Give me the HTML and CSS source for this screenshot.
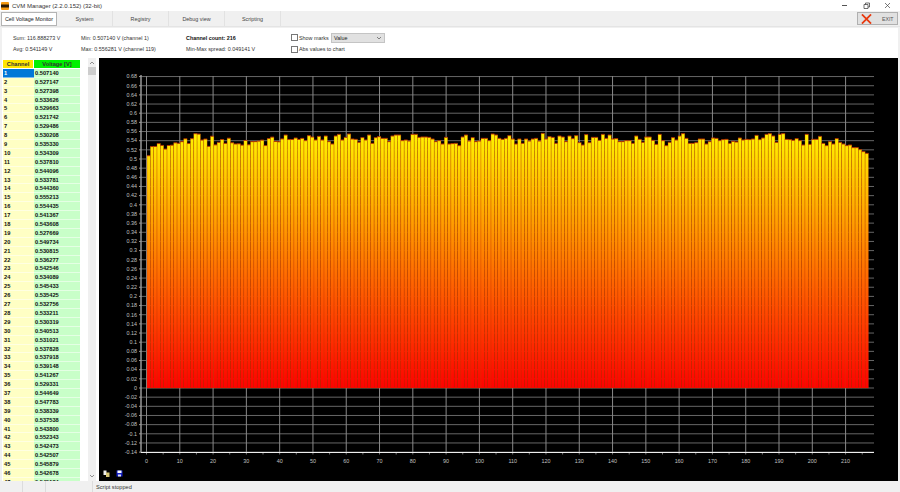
FILE: index.html
```html
<!DOCTYPE html>
<html lang="en">
<head>
    <meta charset="UTF-8">
    <title>CVM Manager (2.2.0.152) (32-bit)</title>
    <link rel="stylesheet" href="styles.css">
</head>
<body>
    <div class="titlebar">
        <svg class="app-icon" viewBox="0 0 8 8">
            <rect width="8" height="8" rx="1" fill="#f59a12"/>
            <rect x="0" y="2.5" width="8" height="3" fill="#2a1a05"/>
        </svg>
        <span class="app-title">CVM Manager (2.2.0.152) (32-bit)</span>
        <div class="window-controls">
            <svg viewBox="0 0 7 7"><path d="M1 3.5h5" stroke="#555" fill="none"/></svg>
            <svg viewBox="0 0 7 7"><path d="M1 2.5h4v4h-4zM2.5 2.5v-1.500h4v4h-1.500" stroke="#333" stroke-width=".7" fill="none"/></svg>
            <svg viewBox="0 0 7 7"><path d="M1 1l5 5M6 1l-5 5" stroke="#444" stroke-width=".7" fill="none"/></svg>
        </div>
    </div>

    <div class="tabs">
        <div class="tab active">Cell Voltage Monitor</div>
        <div class="tab">System</div>
        <div class="tab">Registry</div>
        <div class="tab">Debug view</div>
        <div class="tab">Scripting</div>
        <button class="exit-btn">
            <svg viewBox="0 0 12 11"><path d="M1 .5l10 10M11 .5l-10 10" stroke="#e8380d" stroke-width="2" fill="none"/></svg>
            <span>EXIT</span>
        </button>
    </div>

    <div class="info">
        <div class="info-col col-sum">
            <span>Sum: 116.888273 V</span>
            <span>Avg: 0.541149 V</span>
        </div>
        <div class="info-col col-min">
            <span>Min: 0.507140 V (channel 1)</span>
            <span>Max: 0.556281 V (channel 119)</span>
        </div>
        <div class="info-col col-count">
            <b>Channel count: 216</b>
            <span>Min-Max spread: 0.049141 V</span>
        </div>
        <div class="info-col col-options">
            <div class="option">
                <label class="check"><i></i>Show marks</label>
                <div class="select">Value
                    <svg viewBox="0 0 6 4"><path d="M1 1l2 2 2-2" stroke="#555" stroke-width=".7" fill="none"/></svg>
                </div>
            </div>
            <div class="option">
                <label class="check"><i></i>Abs values to chart</label>
            </div>
        </div>
    </div>

    <div class="main">
        <div class="channels">
            <div class="grid" id="channel-grid">
                <div class="head-channel">Channel</div>
                <div class="head-voltage">Voltage [V]</div>
            </div>
            <div class="scrollbar">
                <svg viewBox="0 0 6 4"><path d="M1 3l2-2 2 2" stroke="#666" stroke-width=".7" fill="none"/></svg>
                <div class="thumb"></div>
                <svg class="arrow-down" viewBox="0 0 6 4"><path d="M1 1l2 2 2-2" stroke="#666" stroke-width=".7" fill="none"/></svg>
            </div>
        </div>

        <div class="chart">
            <svg id="chart-svg" viewBox="99 58 799 423">
                <defs>
                    <linearGradient id="bar-fill" gradientUnits="userSpaceOnUse" x1="0" y1="138" x2="0" y2="388">
                        <stop offset="0" stop-color="#fff000"/>
                        <stop offset="1" stop-color="#ff0000"/>
                    </linearGradient>
                </defs>
            </svg>
            <div class="chart-tools">
                <svg viewBox="0 0 7 7">
                    <path d="M.5.500h3v4.500h-3z" fill="#eee"/>
                    <path d="M3 2.500h3.500v4.500h-3.500z" fill="#d8c878"/>
                </svg>
                <svg viewBox="0 0 7 7">
                    <path d="M.5.500h6v6h-6z" fill="#1420c8"/>
                    <path d="M1.500.500h4v2.500h-4z" fill="#fff"/>
                    <path d="M2 4.500h3v2h-3z" fill="#dde"/>
                </svg>
            </div>
        </div>
    </div>

    <div class="status">
        <div class="status-cell first"></div>
        <div class="status-cell"></div>
        <div class="status-cell wide"></div>
        <div class="status-text">Script stopped</div>
    </div>

    <script src="chart.js"></script>
</body>
</html>
```

FILE: styles.css
```css
html, body {
    margin: 0;
    padding: 0;
}
body {
    width: 900px;
    height: 492px;
    overflow: hidden;
    display: flex;
    flex-direction: column;
    font-family: "Liberation Sans", Arial, sans-serif;
    font-size: 5.4px;
    color: #333;
    background-color: #f0f0f0;
}
.titlebar {
    height: 11px;
    display: flex;
    align-items: center;
    padding-left: 1px;
    background-color: #fff;
}
.app-icon {
    width: 8px;
    height: 8px;
}
.app-title {
    margin-left: 3px;
    font-size: 6px;
    color: #333;
}
.window-controls {
    margin-left: auto;
    display: flex;
    gap: 14.500px;
    padding-right: 9px;
}
.window-controls svg {
    width: 7px;
    height: 7px;
}
.tabs {
    height: 16px;
    display: flex;
    background-color: #f0f0f0;
    border-bottom: 1px solid #e4e4e4;
    box-sizing: border-box;
    padding-left: 1px;
}
.tab {
    width: 56px;
    height: 15px;
    display: flex;
    align-items: center;
    justify-content: center;
    box-sizing: border-box;
    border-right: 1px solid #e2e2e2;
    color: #444;
}
.tab.active {
    height: 14px;
    margin-top: 1px;
    background-color: #fff;
    border: 1px solid #b4b4b4;
    color: #222;
}
.exit-btn {
    margin: 1px 2px 0 auto;
    width: 41px;
    height: 13px;
    padding: 0 0 0 3px;
    display: flex;
    align-items: center;
    background-color: #e1e1e1;
    border: 1px solid #b0b0b0;
    font-family: inherit;
    font-size: 5.2px;
    color: #555;
}
.exit-btn svg {
    width: 11px;
    height: 10px;
}
.exit-btn span {
    margin-left: 10px;
}
.info {
    height: 30px;
    margin: 1px 2px 0;
    display: flex;
    background-color: #fff;
    box-sizing: border-box;
    padding: 1px 0 0 11px;
}
.info-col {
    height: 100%;
    display: flex;
    flex-direction: column;
    justify-content: center;
    gap: 5.500px;
    line-height: 6px;
}
.col-sum {
    width: 68px;
}
.col-min {
    width: 105px;
}
.col-count {
    width: 105px;
}
.col-count b {
    color: #111;
}
.option {
    display: flex;
    align-items: center;
    height: 6px;
}
.check {
    width: 40px;
    display: flex;
    align-items: center;
    gap: 1px;
    white-space: nowrap;
    color: #333;
}
.check i {
    flex: none;
    width: 5px;
    height: 5px;
    background-color: #fff;
    border: 1px solid #777;
}
.select {
    width: 54px;
    height: 10px;
    display: flex;
    align-items: center;
    justify-content: space-between;
    box-sizing: border-box;
    padding: 0 2px;
    background-color: #e1e1e1;
    border: 1px solid #c4c4c4;
    color: #222;
}
.select svg {
    width: 6px;
    height: 4px;
}
.main {
    flex: 1;
    display: flex;
    min-height: 0;
    padding-right: 2px;
}
.channels {
    width: 97px;
    display: flex;
    background-color: #fff;
    margin-left: 2px;
    flex: none;
}
.grid {
    width: 86px;
    height: 100%;
    overflow: hidden;
    box-sizing: border-box;
    padding: 2px 0 0 1px;
    display: grid;
    grid-template-columns: 31px 46px;
    grid-auto-rows: 8.900px;
    font-size: 5.700px;
    font-weight: bold;
    color: #111;
    align-content: start;
}
.head-channel,
.head-voltage {
    text-align: center;
    line-height: 8px;
    height: 8px;
    color: #333;
}
.head-channel {
    background-color: #ffe600;
    margin-right: 1px;
}
.head-voltage {
    background-color: #00f000;
}
.cell-channel,
.cell-voltage {
    line-height: 8.900px;
    padding-left: 1px;
    border-bottom: 1px solid rgba(255, 255, 255, .5);
    box-sizing: border-box;
}
.cell-channel {
    background-color: #ffffc4;
}
.cell-voltage {
    background-color: #c8ffc8;
}
.cell-channel.selected {
    background-color: #0078d7;
    color: #fff;
}
.scrollbar {
    width: 8px;
    height: 100%;
    display: flex;
    flex-direction: column;
    align-items: center;
    background-color: #f0f0f0;
    box-sizing: border-box;
    padding: 3px 0;
}
.scrollbar svg {
    width: 6px;
    height: 4px;
}
.arrow-down {
    margin-top: auto;
}
.thumb {
    width: 100%;
    height: 8px;
    margin-top: 2px;
    background-color: #cdcdcd;
}
.chart {
    position: relative;
    width: 799px;
    background-color: #000;
}
#chart-svg {
    display: block;
    width: 799px;
    height: 423px;
    font-family: "Liberation Sans", Arial, sans-serif;
    font-size: 5.400px;
}
.tick-label {
    fill: #c0c0c0;
}
.chart-tools {
    position: absolute;
    left: 4px;
    bottom: 4px;
    display: flex;
    gap: 6px;
}
.chart-tools svg {
    width: 7px;
    height: 7px;
}
.status {
    height: 11px;
    display: flex;
    align-items: center;
    background-color: #f0f0f0;
    color: #333;
}
.status-cell {
    width: 23px;
    height: 100%;
    border-right: 1px solid #dcdcdc;
    box-sizing: border-box;
}
.status-cell.wide {
    width: 47px;
}
.status-text {
    margin-left: 3px;
    font-size: 5.600px;
}
```

FILE: chart.js
```js
// values read off the table for the first channels, the rest are bar tops
var known = [
    0.507140, 0.527147, 0.527398, 0.533626, 0.529663, 0.521742, 0.529486, 0.530208,
    0.535330, 0.534309, 0.537810, 0.544096, 0.533781, 0.544360, 0.555213, 0.554435,
    0.541367, 0.543608, 0.527669, 0.549734, 0.530815, 0.536277, 0.542546, 0.534089,
    0.545433, 0.535425, 0.532756, 0.533211, 0.530319, 0.540513, 0.531021, 0.537828,
    0.537918, 0.539148, 0.541267, 0.529331, 0.544649, 0.547783, 0.538339, 0.537538,
    0.543800, 0.552343, 0.542473, 0.542507, 0.545879, 0.542678
];

// pixel offsets of the bar tops for channels 47 to 216
var tops = [
    40, 47, 32, 36, 45, 34, 45, 33,
    50, 57, 33, 28, 45, 37, 27, 42, 43, 52, 38, 45, 30, 55, 38, 35, 40, 40, 50, 33, 30, 30,
    47, 45, 48, 28, 28, 37, 36, 36, 37, 42, 50, 47, 57, 37, 57, 56, 55, 62, 36, 30, 48, 38,
    50, 48, 40, 40, 47, 27, 30, 40, 43, 40, 32, 42,
    57, 42, 55, 42, 48, 42, 40, 48, 25, 42, 35, 37, 55, 33, 36, 50, 33, 41, 32, 53, 60, 29,
    53, 37, 37, 46, 28, 40, 30, 42, 41, 50, 50, 47, 47, 55, 33, 43, 52, 36, 36, 46, 58, 28,
    47, 62, 52, 38, 45, 33, 26, 40, 55, 55, 53,
    42, 42, 57, 50, 39, 40, 47, 44, 43, 55, 49, 51, 39, 45, 43, 44, 42, 31, 44, 39, 28, 26,
    33, 52, 28, 26, 43, 44, 46, 41, 47, 60, 28, 58, 43, 43, 34, 55, 62, 50, 57, 41, 52, 57,
    62, 60, 68, 68, 74, 80, 85
];

var values = known.concat(tops.map(function (t) {
    return (263 - t / 3) / 458;
}));

// only the rows that fit in the list are built
var grid = document.getElementById('channel-grid');
values.slice(0, 47).forEach(function (v, i) {
    var a = document.createElement('div');
    a.className = i === 0 ? 'cell-channel selected' : 'cell-channel';
    a.textContent = i + 1;
    var b = document.createElement('div');
    b.className = 'cell-voltage';
    b.textContent = v.toFixed(6);
    grid.appendChild(a);
    grid.appendChild(b);
});

var svg = document.getElementById('chart-svg');
var NS = 'http://www.w3.org/2000/svg';

function add(tag, attrs, text) {
    var el = document.createElementNS(NS, tag);
    for (var k in attrs) {
        el.setAttribute(k, attrs[k]);
    }
    if (text !== undefined) {
        el.textContent = text;
    }
    svg.appendChild(el);
    return el;
}

var left = 141, right = 874, top_ = 76, bottom = 452.5;

function yPos(v) {
    return 388 - v * 458;
}
function xPos(n) {
    return 146.5 + n * 3.329;
}

// horizontal grid and y labels
for (var n = -7; n <= 34; n++) {
    var v = n * 0.02;
    var y = yPos(v);
    add('line', { x1: left, x2: right, y1: y, y2: y, stroke: '#666', 'stroke-width': 1 });
    add('line', { x1: left - 2, x2: left, y1: y, y2: y, stroke: '#999', 'stroke-width': 1 });
    add('text', { x: 137, y: y + 1.8, 'text-anchor': 'end', 'class': 'tick-label' }, parseFloat(v.toFixed(2)));
}

// vertical grid and x labels
for (var c = 0; c <= 210; c += 10) {
    var x = xPos(c);
    add('line', { x1: x, x2: x, y1: top_, y2: bottom, stroke: '#888', 'stroke-width': 1 });
    add('text', { x: x, y: 463, 'text-anchor': 'middle', 'class': 'tick-label' }, c);
}

// small ticks under the x axis
for (var m = 0; m <= 215; m += 5) {
    var tx = xPos(m);
    add('line', { x1: tx, x2: tx, y1: bottom, y2: bottom + 2, stroke: '#aaa', 'stroke-width': .7 });
}

add('line', { x1: left, x2: left, y1: top_ - 1, y2: bottom, stroke: '#999', 'stroke-width': 1.5 });
add('line', { x1: left, x2: right, y1: bottom, y2: bottom, stroke: '#eee', 'stroke-width': 1 });

// bars, thin orange sides and a darker cap on top
values.forEach(function (v, i) {
    var y = yPos(v);
    var bx = 147 + i * 3.34;
    add('rect', {
        x: bx,
        y: y,
        width: 3.34,
        height: 388 - y,
        fill: 'url(#bar-fill)',
        stroke: 'rgba(200, 60, 0, .5)',
        'stroke-width': .6
    });
    add('line', { x1: bx, x2: bx + 3.34, y1: y, y2: y, stroke: '#b83000', 'stroke-width': .8 });
});
```
